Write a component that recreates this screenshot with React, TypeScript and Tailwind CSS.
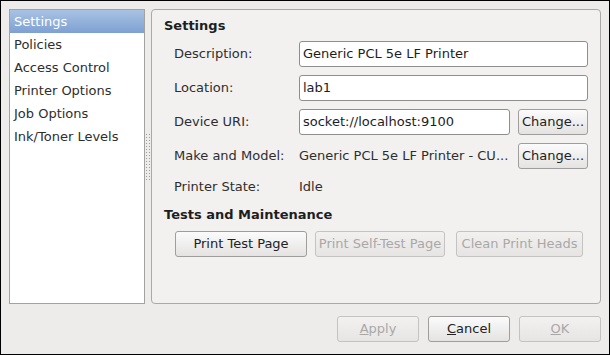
import React from "react";

const font = { fontFamily: '"DejaVu Sans", "Liberation Sans", sans-serif' };

function Btn({ children, disabled, className = "" }: { children: React.ReactNode; disabled?: boolean; className?: string }) {
  return (
    <div
      className={
        "flex h-[26px] items-center justify-center rounded-[3px] border text-[13px] " +
        (disabled
          ? "border-[#c4c3c2] bg-gradient-to-b from-[#f2f1f0] to-[#e6e5e4] text-[#a9a8a7]"
          : "border-[#9f9e9d] bg-gradient-to-b from-[#fbfbfb] to-[#e4e3e2] text-[#222]") +
        " " +
        className
      }
    >
      {children}
    </div>
  );
}

function Field({ value, className = "" }: { value: string; className?: string }) {
  return (
    <div className={"flex h-[26px] items-center rounded-[3px] border border-[#8f8e8d] bg-white pl-[3px] text-[13px] text-[#1e1e1e] " + className}>
      {value}
    </div>
  );
}

export default function App() {
  const items = ["Settings", "Policies", "Access Control", "Printer Options", "Job Options", "Ink/Toner Levels"];
  return (
    <div style={font} className="flex h-[355px] w-[610px] flex-col border border-black bg-[#edeceb] text-[13px] text-[#2e2e2e]">
      <div className="flex h-[303px] pl-2 pr-2 pt-2">
        {/* list */}
        <div className="flex w-[136px] flex-col border border-[#a3a2a1] bg-white">
          {items.map((t, i) => (
            <div
              key={t}
              className={
                "flex h-[23px] items-center pl-[4px] " +
                (i === 0 ? "bg-gradient-to-b from-[#a8c2e3] to-[#7ea1d2] text-white" : "text-[#2e2e2e]")
              }
            >
              {t}
            </div>
          ))}
        </div>
        {/* splitter */}
        <div className="flex w-[6px] items-center justify-center">
          <div className="flex gap-[2px]">
            {[0, 1].map((c) => (
              <div key={c} className="flex flex-col gap-[2px]">
                {Array.from({ length: 16 }).map((_, k) => (
                  <div key={k} className="h-px w-px bg-[#9c9b9a]" />
                ))}
              </div>
            ))}
          </div>
        </div>
        {/* panel */}
        <div className="flex flex-1 flex-col rounded-[4px] border border-[#aaa9a8] bg-[#f2f1f0] pl-3 pt-[8px]">
          <div className="flex h-[16px] items-center font-bold text-[#1e1e1e]">Settings</div>
          <div className="mt-[7px] flex flex-col gap-[8px] pl-[10px] pr-3">
            <div className="flex items-center">
              <div className="w-[125px]">Description:</div>
              <Field value="Generic PCL 5e LF Printer" className="flex-1" />
            </div>
            <div className="flex items-center">
              <div className="w-[125px]">Location:</div>
              <Field value="lab1" className="flex-1" />
            </div>
            <div className="flex items-center">
              <div className="w-[125px]">Device URI:</div>
              <Field value="socket://localhost:9100" className="flex-1" />
              <Btn className="ml-[8px] w-[70px]">Change...</Btn>
            </div>
            <div className="flex items-center">
              <div className="w-[125px]">Make and Model:</div>
              <div className="flex-1">Generic PCL 5e LF Printer - CU...</div>
              <Btn className="ml-[8px] w-[70px]">Change...</Btn>
            </div>
            <div className="flex h-[20px] items-center">
              <div className="w-[125px]">Printer State:</div>
              <div>Idle</div>
            </div>
          </div>
          <div className="mt-[10px] flex h-[16px] items-center font-bold text-[#1e1e1e]">Tests and Maintenance</div>
          <div className="mt-[8px] flex gap-[8px] pl-[11px]">
            <Btn className="w-[132px]">Print Test Page</Btn>
            <Btn disabled className="w-[130px]">Print Self-Test Page</Btn>
            <Btn disabled className="ml-[3px] w-[127px]">Clean Print Heads</Btn>
          </div>
        </div>
      </div>
      <div className="mt-[12px] flex justify-end gap-[9px] pr-2">
        <Btn disabled className="w-[82px]"><span><span className="underline">A</span>pply</span></Btn>
        <Btn className="w-[82px]"><span><span className="underline">C</span>ancel</span></Btn>
        <Btn disabled className="w-[82px]"><span><span className="underline">O</span>K</span></Btn>
      </div>
    </div>
  );
}
